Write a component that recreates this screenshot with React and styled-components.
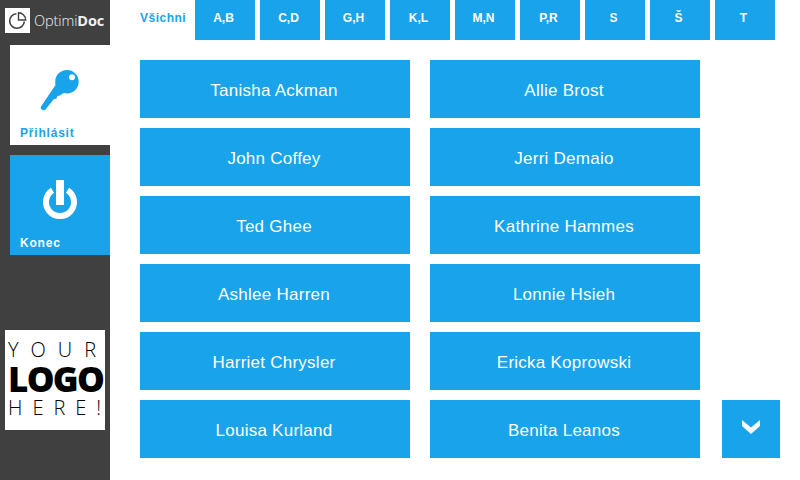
import React from "react";
import styled, { createGlobalStyle } from "styled-components";

const BLUE = "#19a3ea";

const tabs = ["A,B", "C,D", "G,H", "K,L", "M,N", "P,R", "S", "Š", "T"];

const names = [
  "Tanisha Ackman",
  "Allie Brost",
  "John Coffey",
  "Jerri Demaio",
  "Ted Ghee",
  "Kathrine Hammes",
  "Ashlee Harren",
  "Lonnie Hsieh",
  "Harriet Chrysler",
  "Ericka Koprowski",
  "Louisa Kurland",
  "Benita Leanos",
];

const GlobalStyle = createGlobalStyle`
  html, body {
    margin: 0;
    padding: 0;
    background: #fff;
  }
  body {
    font-family: "Liberation Sans", Arial, sans-serif;
  }
`;

const Screen = styled.div`
  display: flex;
  width: 800px;
  height: 480px;
  overflow: hidden;
`;

const Sidebar = styled.aside`
  display: flex;
  flex-direction: column;
  flex: 0 0 110px;
  background: #404040;
`;

const Brand = styled.div`
  display: flex;
  align-items: center;
  height: 30px;
  padding: 5px 0 0 5px;
  margin-bottom: 10px;
`;

const BrandMark = styled.div`
  display: flex;
  align-items: center;
  justify-content: center;
  width: 25px;
  height: 25px;
  background: #fff;
`;

const BrandName = styled.div`
  margin-left: 4px;
  font-family: "Open Sans", sans-serif;
  font-size: 14.5px;
  font-weight: 300;
  letter-spacing: -0.1px;
  color: #f0f0f0;
  b {
    font-weight: 700;
  }
`;

const SideTile = styled.button`
  position: relative;
  display: block;
  width: 100px;
  height: 100px;
  margin: 0 0 10px 10px;
  padding: 0;
  border: 0;
  background: ${(p) => (p.$active ? "#fff" : BLUE)};
  color: ${(p) => (p.$active ? BLUE : "#fff")};
  font-family: inherit;
`;

const TileIcon = styled.svg`
  position: absolute;
  left: 0;
  top: 0;
`;

const TileLabel = styled.span`
  position: absolute;
  left: 10px;
  bottom: 5px;
  font-size: 12px;
  line-height: 14px;
  font-weight: 700;
  letter-spacing: 0.8px;
`;

const LogoBox = styled.div`
  display: flex;
  flex-direction: column;
  width: 100px;
  height: 100px;
  margin: 65px 0 0 5px;
  padding: 10px 0 0 3px;
  box-sizing: border-box;
  background: #fff;
  color: #000;
  font-family: "Open Sans", sans-serif;
`;

const LogoLine = styled.div`
  font-size: 20px;
  line-height: 20px;
  font-weight: 300;
  white-space: nowrap;
  letter-spacing: ${(p) => p.$spacing}px;
`;

const LogoBig = styled.div`
  font-size: 35px;
  line-height: 38px;
  font-weight: 800;
  letter-spacing: -1.7px;
`;

const Main = styled.main`
  flex: 1;
  display: flex;
  flex-direction: column;
  padding-left: 30px;
`;

const TabBar = styled.nav`
  display: flex;
  gap: 5px;
  height: 40px;
  margin-bottom: 20px;
`;

const AllTab = styled.div`
  flex: 0 0 50px;
  padding-top: 11px;
  font-size: 12px;
  line-height: 14px;
  font-weight: 700;
  letter-spacing: 0.5px;
  color: ${BLUE};
`;

const Tab = styled.button`
  flex: 0 0 60px;
  height: 40px;
  padding: 0 3px 5px 0;
  border: 0;
  background: ${BLUE};
  color: #fff;
  font-family: inherit;
  font-size: 12px;
  font-weight: 700;
`;

const Body = styled.div`
  display: flex;
  align-items: flex-end;
`;

const NameGrid = styled.div`
  display: grid;
  grid-template-columns: 270px 270px;
  grid-auto-rows: 58px;
  column-gap: 20px;
  row-gap: 10px;
`;

const NameButton = styled.button`
  padding: 4px 2px 0 0;
  border: 0;
  background: ${BLUE};
  color: #fff;
  font-family: inherit;
  font-size: 17px;
  letter-spacing: 0.25px;
`;

const ScrollButton = styled.button`
  display: flex;
  align-items: center;
  justify-content: center;
  width: 58px;
  height: 58px;
  margin-left: 22px;
  padding: 0 0 4px;
  border: 0;
  background: ${BLUE};
`;

const BrandIcon = () => (
  <svg width="19" height="19" viewBox="0 0 19 19">
    <path
      d="M8.500 2.700a7.300 7.300 0 1 0 7.800 7.800"
      fill="none"
      stroke="#404040"
      strokeWidth="1.600"
    />
    <path
      d="M10.500 1.800A7.200 7.200 0 0 1 17.700 9H10.500z"
      fill="none"
      stroke="#404040"
      strokeWidth="1.400"
    />
  </svg>
);

const KeyIcon = () => (
  <TileIcon width="100" height="100" viewBox="0 0 100 100">
    <path
      fill="currentColor"
      fillRule="evenodd"
      d="M57 25a11.700 11.700 0 0 1 0 23.400c-1.200 0-2.300-.2-3.400-.5L50 50.500 47.500 51l-1 2.500-3 1-8 10c-.6.700-1.500.9-2.500.8L31 64c-.5-.8-.5-1.600 0-2.500L45.500 40c-.2-1-.3-2-.3-3.300C45.200 30 50.500 25 57 25zm5 4.300a3 3 0 1 0 0 6 3 3 0 0 0 0-6z"
    />
  </TileIcon>
);

const PowerIcon = () => (
  <TileIcon width="100" height="100" viewBox="0 0 100 100">
    <path
      d="M42.500 35.200A14 14 0 1 0 57.500 35.200"
      fill="none"
      stroke="currentColor"
      strokeWidth="6"
    />
    <rect x="46" y="25" width="8" height="25" fill="currentColor" />
  </TileIcon>
);

const ChevronIcon = () => (
  <svg width="18" height="14" viewBox="0 0 18 14">
    <path d="M0 0l9 7.500L18 0v6l-9 8-9-8z" fill="#fff" />
  </svg>
);

export default function App() {
  return (
    <>
      <GlobalStyle />
      <Screen>
        <Sidebar>
          <Brand>
            <BrandMark>
              <BrandIcon />
            </BrandMark>
            <BrandName>
              Optimi<b>Doc</b>
            </BrandName>
          </Brand>
          <SideTile $active>
            <KeyIcon />
            <TileLabel>Přihlásit</TileLabel>
          </SideTile>
          <SideTile>
            <PowerIcon />
            <TileLabel>Konec</TileLabel>
          </SideTile>
          <LogoBox>
            <LogoLine $spacing={12}>YOUR</LogoLine>
            <LogoBig>LOGO</LogoBig>
            <LogoLine $spacing={10}>HERE!</LogoLine>
          </LogoBox>
        </Sidebar>
        <Main>
          <TabBar>
            <AllTab>Všichni</AllTab>
            {tabs.map((t) => (
              <Tab key={t}>{t}</Tab>
            ))}
          </TabBar>
          <Body>
            <NameGrid>
              {names.map((n) => (
                <NameButton key={n}>{n}</NameButton>
              ))}
            </NameGrid>
            <ScrollButton>
              <ChevronIcon />
            </ScrollButton>
          </Body>
        </Main>
      </Screen>
    </>
  );
}
